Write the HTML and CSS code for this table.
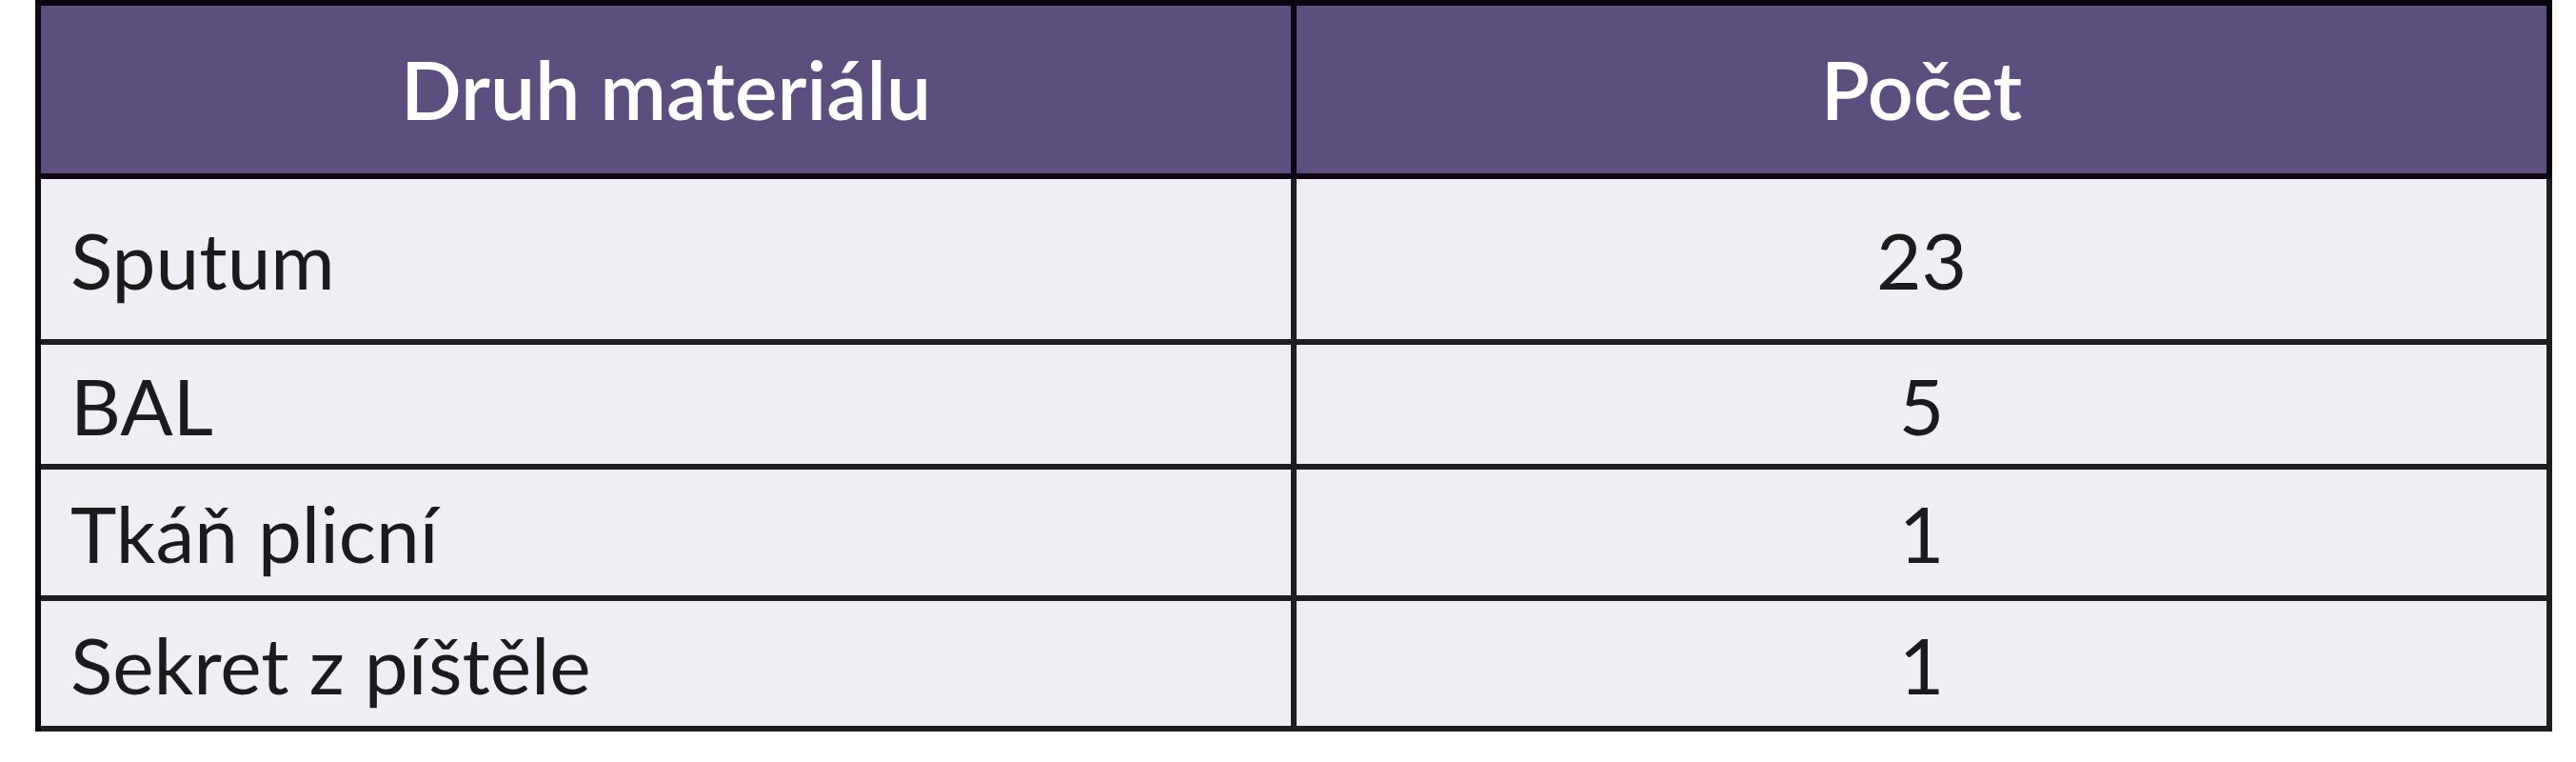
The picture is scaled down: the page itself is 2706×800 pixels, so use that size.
FILE: index.html
```html
<!DOCTYPE html>
<html lang="cs">
<head>
<meta charset="utf-8">
<title>Druh materiálu</title>
<link rel="stylesheet" href="styles.css">
</head>
<body>
<table class="tbl">
  <thead>
    <tr class="row-head">
      <th class="cell head">Druh materiálu</th>
      <th class="cell head">Počet</th>
    </tr>
  </thead>
  <tbody>
    <tr class="row r1">
      <td class="cell name">Sputum</td>
      <td class="cell num">23</td>
    </tr>
    <tr class="row r2">
      <td class="cell name">BAL</td>
      <td class="cell num">5</td>
    </tr>
    <tr class="row r3">
      <td class="cell name">Tkáň plicní</td>
      <td class="cell num">1</td>
    </tr>
    <tr class="row r4">
      <td class="cell name">Sekret z píštěle</td>
      <td class="cell num">1</td>
    </tr>
  </tbody>
</table>
</body>
</html>
```
FILE: styles.css
```css
html, body {
  margin: 0;
  padding: 0;
  background: #ffffff;
}

body {
  font-family: "Lato", "Liberation Sans", sans-serif;
}

.tbl {
  margin-left: 37px;
  border-collapse: separate;
  border-spacing: 0;
  border-top: 6px solid #0a0410;
  border-left: 6px solid #0e0912;
  table-layout: fixed;
  width: 2644px;
}

.cell {
  width: 1313px;
  padding: 0;
  border-right: 6px solid #1f1d20;
  border-bottom: 6px solid #1f1d20;
  vertical-align: middle;
  background: #efeef5;
  color: #1b1a1d;
  font-size: 82px;
  font-weight: 400;
  line-height: 1;
}

.head {
  background: #5c4f80;
  color: #ffffff;
  font-weight: 600;
  font-size: 84px;
  text-align: center;
  border-right-color: #0a0410;
  border-bottom-color: #0d0514;
}

.row-head { height: 182px; }
.r1 { height: 174px; }
.r2 { height: 131px; }
.r3 { height: 138px; }
.r4 { height: 137px; }

.name {
  text-align: left;
  padding-left: 31px;
}

.num {
  text-align: center;
}
```
